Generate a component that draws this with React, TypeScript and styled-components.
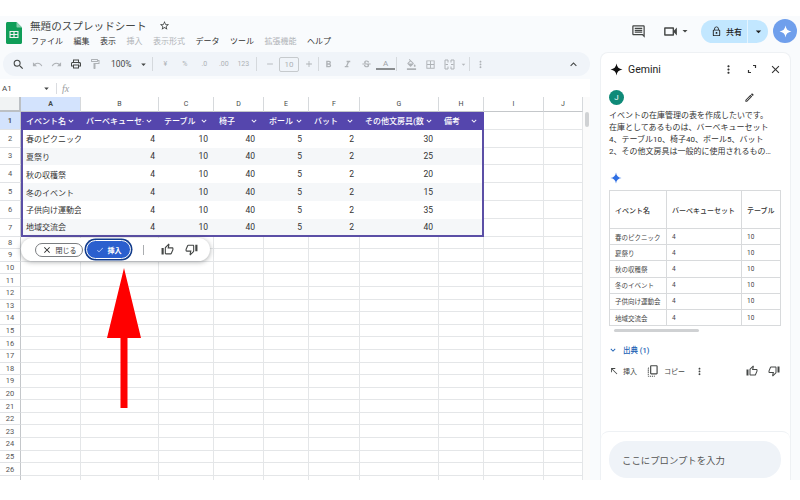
import React from "react";
import styled, { createGlobalStyle } from "styled-components";
import {
  MdSearch,
  MdUndo,
  MdRedo,
  MdOutlineLocalPrintshop,
  MdOutlineFormatPaint,
  MdArrowDropDown,
  MdRemove,
  MdAdd,
  MdFormatBold,
  MdFormatItalic,
  MdStrikethroughS,
  MdOutlineFormatColorFill,
  MdBorderAll,
  MdMoreVert,
  MdKeyboardArrowUp,
  MdKeyboardArrowDown,
  MdStarBorder,
  MdOutlineComment,
  MdOutlineVideocam,
  MdLockOutline,
  MdClose,
  MdOutlineEdit,
  MdOutlineThumbUp,
  MdOutlineThumbDown,
  MdCheck,
  MdNorthWest,
  MdOutlineCopyAll,
} from "react-icons/md";

const FONT = `Roboto, "Noto Sans CJK JP", sans-serif`;

const GlobalStyle = createGlobalStyle`
  html, body {
    margin: 0;
    padding: 0;
    background: #ffffff;
    font-family: ${FONT};
  }
  * { box-sizing: border-box; }
`;

const columns = [
  { letter: "A", width: 60, label: "イベント名", pad: 0 },
  { letter: "B", width: 78, label: "バーベキューセ‧", pad: 4 },
  { letter: "C", width: 55, label: "テーブル", pad: 6 },
  { letter: "D", width: 50, label: "椅子", pad: 9 },
  { letter: "E", width: 45, label: "ボール", pad: 7 },
  { letter: "F", width: 51, label: "バット", pad: 6 },
  { letter: "G", width: 79, label: "その他文房具(数", pad: 6 },
  { letter: "H", width: 45, label: "備考", pad: 0 },
  { letter: "I", width: 60, label: "", pad: 0 },
  { letter: "J", width: 39, label: "", pad: 0 },
];

const events = [
  ["春のピクニック", "30"],
  ["夏祭り", "25"],
  ["秋の収穫祭", "20"],
  ["冬のイベント", "15"],
  ["子供向け運動会", "35"],
  ["地域交流会", "40"],
];

const menuItems = [
  { label: "ファイル" },
  { label: "編集" },
  { label: "表示" },
  { label: "挿入", muted: true },
  { label: "表示形式", muted: true },
  { label: "データ" },
  { label: "ツール" },
  { label: "拡張機能", muted: true },
  { label: "ヘルプ" },
];

const GeminiStar = ({ size, color }: { size: number; color: string }) => (
  <svg width={size} height={size} viewBox="0 0 24 24">
    <path
      fill={color}
      d="M12 1C12.9 7.6 16.4 11.1 23 12C16.4 12.9 12.9 16.4 12 23C11.1 16.4 7.6 12.9 1 12C7.6 11.1 11.1 7.6 12 1Z"
    />
  </svg>
);

const SheetsLogo = () => (
  <svg width="16" height="22" viewBox="0 0 16 22">
    <path fill="#0f9d58" d="M1.5 0H10.5L16 5.5V20.5C16 21.3 15.3 22 14.5 22H1.5C.7 22 0 21.3 0 20.5V1.5C0 .7.7 0 1.5 0Z" />
    <path fill="#87ceac" d="M10.5 0L16 5.5H11.5C10.9 5.5 10.5 5.1 10.5 4.5Z" />
    <path fill="#f1f1f1" d="M3.5 9H12.5V16H3.5ZM4.6 10.1V12H7.4V10.1ZM8.6 10.1V12H11.4V10.1ZM4.6 13V14.9H7.4V13ZM8.6 13V14.9H11.4V13Z" fillRule="evenodd" />
  </svg>
);

const MergeIcon = () => (
  <svg width="11" height="11" viewBox="0 0 11 11" fill="none" stroke="#aeb2b6" strokeWidth="1">
    <path d="M4 3.5V1H1V10H4V7.5M7 3.5V1H10V10H7V7.5M1.5 5.5H4M9.5 5.5H7" />
  </svg>
);

const ExpandCorners = () => (
  <svg width="10" height="10" viewBox="0 0 10 10" fill="none" stroke="#333" strokeWidth="1.2">
    <path d="M6 1.5H8.5V4M1.5 6V8.5H4" />
  </svg>
);

const App = () => (
  <Page>
    <GlobalStyle />
    <Frame>
      <TopBar>
        <LogoSlot>
          <SheetsLogo />
        </LogoSlot>
        <TitleBlock>
          <TitleRow>
            <Title>無題のスプレッドシート</Title>
            <MdStarBorder size={11} color="#444746" />
          </TitleRow>
          <MenuRow>
            {menuItems.map((item) => (
              <MenuItem key={item.label} $muted={item.muted}>
                {item.label}
              </MenuItem>
            ))}
          </MenuRow>
        </TitleBlock>
        <TopActions>
          <MdOutlineComment size={15} color="#444746" />
          <VideoButton>
            <MdOutlineVideocam size={17} color="#444746" />
            <MdArrowDropDown size={12} color="#444746" />
          </VideoButton>
          <SharePill>
            <ShareMain>
              <MdLockOutline size={11} color="#222" />
              共有
            </ShareMain>
            <ShareArrow>
              <MdArrowDropDown size={13} color="#222" />
            </ShareArrow>
          </SharePill>
          <GeminiCircle>
            <GeminiStar size={13} color="#ffffff" />
          </GeminiCircle>
        </TopActions>
      </TopBar>
      <Body>
        <Main>
          <Toolbar>
            <ToolIcon><MdSearch size={13} color="#444746" /></ToolIcon>
            <ToolIcon $muted><MdUndo size={11} /></ToolIcon>
            <ToolIcon $muted><MdRedo size={11} /></ToolIcon>
            <ToolIcon><MdOutlineLocalPrintshop size={12} color="#444746" /></ToolIcon>
            <ToolIcon $muted><MdOutlineFormatPaint size={12} /></ToolIcon>
            <ZoomValue>100%</ZoomValue>
            <MdArrowDropDown size={11} color="#444746" />
            <ToolDivider $left={3} $right={3} />
            <ToolText>¥</ToolText>
            <ToolText>%</ToolText>
            <ToolText>.0</ToolText>
            <ToolText>.00</ToolText>
            <ToolText>123</ToolText>
            <ToolDivider $left={3} $right={3} />
            <ToolIcon $muted><MdRemove size={10} /></ToolIcon>
            <FontSizeBox>10</FontSizeBox>
            <ToolIcon $muted><MdAdd size={10} /></ToolIcon>
            <ToolDivider />
            <ToolIcon $muted><MdFormatBold size={11} /></ToolIcon>
            <ToolIcon $muted><MdFormatItalic size={11} /></ToolIcon>
            <ToolIcon $muted><MdStrikethroughS size={11} /></ToolIcon>
            <TextColor>A</TextColor>
            <ToolDivider $left={1} $right={5} />
            <ToolIcon $muted><MdOutlineFormatColorFill size={11} /></ToolIcon>
            <ToolIcon $muted><MdBorderAll size={11} /></ToolIcon>
            <ToolIcon $muted><MergeIcon /></ToolIcon>
            <MdArrowDropDown size={9} color="#b5b9bd" />
            <ToolDivider $left={1} $right={1} />
            <ToolIcon $muted><MdMoreVert size={11} /></ToolIcon>
            <ToolbarEnd>
              <MdKeyboardArrowUp size={13} color="#444746" />
            </ToolbarEnd>
          </Toolbar>
          <FormulaBar>
            <NameBox>A1</NameBox>
            <MdArrowDropDown size={11} color="#444746" />
            <FormulaDivider />
            <FxMark>fx</FxMark>
          </FormulaBar>
          <SheetArea>
            <SheetGrid>
              <Corner />
              {columns.map((col) => (
                <ColumnHead key={col.letter} $active={col.letter === "A"}>
                  {col.letter}
                </ColumnHead>
              ))}

              <RowHead $active>1</RowHead>
              {columns.map((col, i) =>
                i < 8 ? (
                  <TableHead key={col.letter}>
                    <span>{col.label}</span>
                    <MdKeyboardArrowDown size={10} color="#ffffff" />
                  </TableHead>
                ) : (
                  <Cell key={col.letter} />
                )
              )}

              {events.map(([name, other], rowIndex) => (
                <React.Fragment key={name}>
                  <RowHead>{rowIndex + 2}</RowHead>
                  {columns.map((col, i) => {
                    const values = [name, "4", "10", "40", "5", "2", other, ""];
                    if (i >= 8) return <Cell key={col.letter} />;
                    return (
                      <TableCell
                        key={col.letter}
                        $stripe={rowIndex % 2 === 1}
                        $first={i === 0}
                        $last={i === 7}
                        $bottom={rowIndex === 5}
                        $pad={col.pad}
                      >
                        {values[i]}
                      </TableCell>
                    );
                  })}
                </React.Fragment>
              ))}

              {Array.from({ length: 20 }, (_, r) => (
                <React.Fragment key={r}>
                  <RowHead>{r < 19 ? r + 8 : ""}</RowHead>
                  {columns.map((col) => (
                    <Cell key={col.letter} />
                  ))}
                </React.Fragment>
              ))}
            </SheetGrid>
            <ScrollTrack>
              <ScrollThumb />
            </ScrollTrack>

            <InsertBar>
              <CloseChip>
                <MdClose size={10} color="#222" />
                閉じる
              </CloseChip>
              <InsertChip>
                <MdCheck size={8} color="#cfe0ff" />
                挿入
              </InsertChip>
              <BarDivider />
              <BarIcons>
                <MdOutlineThumbUp size={13} color="#444746" />
                <MdOutlineThumbDown size={13} color="#444746" />
              </BarIcons>
            </InsertBar>

            <BigArrow width="36" height="141" viewBox="0 0 36 141">
              <path fill="#ff0000" d="M18 0L35 70H21.5V140H14.5V70H1Z" />
            </BigArrow>
          </SheetArea>
        </Main>

        <Panel>
          <PanelHeader>
            <GeminiStar size={13} color="#111" />
            <PanelTitle>Gemini</PanelTitle>
            <PanelHeaderIcons>
              <MdMoreVert size={13} color="#333" />
              <ExpandCorners />
              <MdClose size={13} color="#333" />
            </PanelHeaderIcons>
          </PanelHeader>
          <PromptHead>
            <Avatar>J</Avatar>
            <MdOutlineEdit size={11} color="#333" />
          </PromptHead>
          <PromptText>
            イベントの在庫管理の表を作成したいです。
            <br />
            在庫としてあるものは、バーベキューセット
            <br />
            4、テーブル10、椅子40、ボール5、バット
            <br />
            2、その他文房具は一般的に使用されるもの…
          </PromptText>
          <ReplyStar>
            <GeminiStar size={12} color="#2f6fe4" />
          </ReplyStar>
          <ReplyTable>
            <ReplyHeadCell>イベント名</ReplyHeadCell>
            <ReplyHeadCell>バーベキューセット</ReplyHeadCell>
            <ReplyHeadCell>テーブル</ReplyHeadCell>
            {events.map(([name]) => (
              <React.Fragment key={name}>
                <ReplyCell>{name}</ReplyCell>
                <ReplyCell>4</ReplyCell>
                <ReplyCell>10</ReplyCell>
              </React.Fragment>
            ))}
          </ReplyTable>
          <ReplyScrollbar />
          <SourceRow>
            <MdKeyboardArrowDown size={10} color="#1a5fb4" />
            出典 (1)
          </SourceRow>
          <ActionRow>
            <MdNorthWest size={10} color="#444746" />
            <ActionLabel>挿入</ActionLabel>
            <MdOutlineCopyAll size={14} color="#444746" />
            <ActionLabel>コピー</ActionLabel>
            <MdMoreVert size={11} color="#444746" />
            <ActionEnd>
              <MdOutlineThumbUp size={12} color="#444746" />
              <MdOutlineThumbDown size={12} color="#444746" />
            </ActionEnd>
          </ActionRow>
          <PromptDock>
            <PromptInput>ここにプロンプトを入力</PromptInput>
          </PromptDock>
        </Panel>
      </Body>
    </Frame>
  </Page>
);

const Page = styled.div`
  width: 800px;
  height: 500px;
  padding-top: 16px;
  overflow: hidden;
  background: #ffffff;
`;

const Frame = styled.div`
  height: 464px;
  background: #f9fbfd;
  display: flex;
  flex-direction: column;
`;

const TopBar = styled.div`
  height: 36px;
  display: flex;
  align-items: flex-start;
  color: #1f1f1f;
`;

const LogoSlot = styled.div`
  width: 30px;
  padding: 6px 0 0 6px;
`;

const TitleBlock = styled.div`
  display: flex;
  flex-direction: column;
  padding-top: 2px;
`;

const TitleRow = styled.div`
  display: flex;
  align-items: center;
  gap: 12px;
  height: 14px;
`;

const Title = styled.div`
  font-size: 10.6px;
  color: #444746;
`;

const MenuRow = styled.div`
  display: flex;
  gap: 10.5px;
  margin-top: 3px;
  padding-left: 1px;
`;

const MenuItem = styled.div<{ $muted?: boolean }>`
  font-size: 8px;
  line-height: 14px;
  color: ${(p) => (p.$muted ? "#b0b3b7" : "#333")};
`;

const TopActions = styled.div`
  margin-left: auto;
  display: flex;
  align-items: center;
  height: 24px;
  margin-top: 3px;
  padding-right: 3px;
`;

const VideoButton = styled.div`
  display: flex;
  align-items: center;
  margin: 0 10px 0 16px;
`;

const SharePill = styled.div`
  width: 67px;
  height: 23px;
  border-radius: 12px;
  background: #c2e7ff;
  display: flex;
  align-items: center;
  margin-right: 5px;
`;

const ShareMain = styled.div`
  width: 47px;
  height: 100%;
  display: flex;
  align-items: center;
  gap: 4px;
  padding-left: 10px;
  border-right: 1px solid #e4f4ff;
  font-size: 8px;
  font-weight: 500;
  color: #222;
`;

const ShareArrow = styled.div`
  flex: 1;
  display: flex;
  justify-content: center;
`;

const GeminiCircle = styled.div`
  width: 24px;
  height: 24px;
  border-radius: 50%;
  background: #6f9fec;
  display: flex;
  align-items: center;
  justify-content: center;
`;

const Body = styled.div`
  flex: 1;
  display: flex;
  min-height: 0;
`;

const Main = styled.div`
  width: 590px;
  display: flex;
  flex-direction: column;
`;

const Toolbar = styled.div`
  height: 24px;
  margin-left: 3px;
  padding-left: 6px;
  border-radius: 12px;
  background: #f0f4f9;
  display: flex;
  align-items: center;
  flex-shrink: 0;
`;

const ToolIcon = styled.div<{ $muted?: boolean }>`
  width: 19px;
  display: flex;
  justify-content: center;
  align-items: center;
  color: ${(p) => (p.$muted ? "#aeb2b6" : "#444746")};
`;

const ToolText = styled.div`
  width: 19.5px;
  text-align: center;
  font-size: 7px;
  color: #aeb2b6;
`;

const ZoomValue = styled.div`
  font-size: 8.5px;
  color: #444746;
  margin-left: 7px;
  margin-right: 6px;
`;

const ToolDivider = styled.div<{ $left?: number; $right?: number }>`
  width: 1px;
  height: 14px;
  background: #d5d9dd;
  margin-left: ${(p) => p.$left ?? 0}px;
  margin-right: ${(p) => p.$right ?? 0}px;
`;

const FontSizeBox = styled.div`
  width: 20px;
  height: 15px;
  border: 1px solid #c6cacd;
  border-radius: 2px;
  font-size: 8px;
  line-height: 13px;
  text-align: center;
  color: #aeb2b6;
`;

const TextColor = styled.div`
  width: 19px;
  font-size: 8px;
  text-align: center;
  color: #9ea2a6;
  line-height: 9px;
  border-bottom: 2px solid #8a8d90;
`;

const ToolbarEnd = styled.div`
  margin-left: auto;
  padding-right: 10px;
  display: flex;
`;

const FormulaBar = styled.div`
  height: 18px;
  margin-top: 3px;
  background: #ffffff;
  display: flex;
  align-items: center;
  flex-shrink: 0;
`;

const NameBox = styled.div`
  width: 41px;
  padding-left: 2px;
  font-size: 8px;
  color: #444746;
`;

const FormulaDivider = styled.div`
  width: 1px;
  height: 11px;
  background: #dadce0;
  margin: 0 5px 0 4px;
`;

const FxMark = styled.div`
  font-family: "Liberation Serif", serif;
  font-style: italic;
  font-size: 10px;
  color: #9a9da0;
`;

const SheetArea = styled.div`
  position: relative;
  flex: 1;
  min-height: 0;
  background: #ffffff;
  display: flex;
  overflow: hidden;
`;

const SheetGrid = styled.div`
  display: grid;
  grid-template-columns: 21px ${columns.map((c) => `${c.width}px`).join(" ")};
  grid-template-rows: 15px repeat(7, 17.8px) repeat(20, 12.6px);
  align-content: start;
  flex-shrink: 0;
`;

const Corner = styled.div`
  background: #f1f3f4;
  border-right: 2px solid #bcc0c4;
  border-bottom: 2px solid #bcc0c4;
`;

const ColumnHead = styled.div<{ $active?: boolean }>`
  background: ${(p) => (p.$active ? "#d3e3fd" : "#ffffff")};
  border-right: 1px solid #d6d9dc;
  border-bottom: 1px solid #c4c7ca;
  font-size: 7px;
  font-weight: ${(p) => (p.$active ? 700 : 400)};
  color: #444746;
  display: flex;
  align-items: center;
  justify-content: center;
`;

const RowHead = styled.div<{ $active?: boolean }>`
  background: ${(p) => (p.$active ? "#d3e3fd" : "#ffffff")};
  border-right: 1px solid #c4c7ca;
  border-bottom: 1px solid #e1e3e6;
  font-size: 7.5px;
  font-weight: ${(p) => (p.$active ? 700 : 400)};
  color: #555;
  display: flex;
  align-items: center;
  justify-content: center;
`;

const Cell = styled.div`
  border-right: 1px solid #e4e6e8;
  border-bottom: 1px solid #e4e6e8;
`;

const TableHead = styled.div`
  background: #5546ad;
  color: #ffffff;
  font-size: 8px;
  font-weight: 500;
  padding: 0 5px 0 5px;
  display: flex;
  align-items: center;
  justify-content: space-between;
  white-space: nowrap;
  overflow: hidden;
  span {
    overflow: hidden;
  }
`;

const TableCell = styled.div<{
  $stripe: boolean;
  $first: boolean;
  $last: boolean;
  $bottom: boolean;
  $pad: number;
}>`
  background: ${(p) => (p.$stripe ? "#f5f7f9" : "#ffffff")};
  border-left: ${(p) => (p.$first ? "2px solid #5b4fa6" : "none")};
  border-right: ${(p) => (p.$last ? "2px solid #5b4fa6" : "none")};
  border-bottom: ${(p) => (p.$bottom ? "2px solid #5b4fa6" : "none")};
  font-size: ${(p) => (p.$first ? "8px" : "8.5px")};
  color: #333;
  display: flex;
  align-items: center;
  justify-content: ${(p) => (p.$first ? "flex-start" : "flex-end")};
  padding-left: ${(p) => (p.$first ? "3px" : "0")};
  padding-right: ${(p) => p.$pad}px;
  white-space: nowrap;
`;

const ScrollTrack = styled.div`
  width: 7px;
  padding: 15px 1px 0 2px;
  background: #fbfbfb;
`;

const ScrollThumb = styled.div`
  height: 15px;
  border-radius: 3px;
  background: #d0d2d4;
`;

const InsertBar = styled.div`
  position: absolute;
  left: 21px;
  top: 141px;
  width: 189px;
  height: 23px;
  background: #ffffff;
  border-radius: 12px;
  box-shadow: 0 1px 5px rgba(60, 64, 67, 0.45);
  display: flex;
  align-items: center;
  padding-left: 14px;
`;

const CloseChip = styled.div`
  width: 48px;
  height: 14px;
  border: 1px solid #7a7d80;
  border-radius: 7px;
  font-size: 7px;
  color: #333;
  display: flex;
  align-items: center;
  justify-content: center;
  gap: 4px;
`;

const InsertChip = styled.div`
  width: 45px;
  height: 19px;
  margin-left: 3px;
  border-radius: 10px;
  background: #2b5fce;
  border: 1px solid #ffffff;
  box-shadow: 0 0 0 1.5px #123c8c;
  color: #ffffff;
  font-size: 7px;
  font-weight: 700;
  display: flex;
  align-items: center;
  justify-content: center;
  gap: 4px;
`;

const BarDivider = styled.div`
  width: 1px;
  height: 10px;
  background: #aaadb0;
  margin: 0 17px 0 12px;
`;

const BarIcons = styled.div`
  display: flex;
  gap: 11px;
`;

const BigArrow = styled.svg`
  position: absolute;
  left: 106px;
  top: 171px;
`;

const Panel = styled.div`
  width: 191px;
  margin-left: 10px;
  background: #ffffff;
  border: 1px solid #eef1f4;
  border-bottom: none;
  border-radius: 8px 8px 0 0;
  display: flex;
  flex-direction: column;
  padding: 0 9px 0 8px;
  min-height: 0;
  position: relative;
`;

const PanelHeader = styled.div`
  display: flex;
  align-items: center;
  height: 32px;
  padding-left: 1px;
  gap: 5px;
`;

const PanelTitle = styled.div`
  font-size: 10.5px;
  color: #222;
`;

const PanelHeaderIcons = styled.div`
  margin-left: auto;
  display: flex;
  align-items: center;
  gap: 12px;
  margin-right: -1px;
`;

const PromptHead = styled.div`
  display: flex;
  align-items: center;
  justify-content: space-between;
  height: 15px;
  margin-top: 5px;
  padding-right: 26px;
`;

const Avatar = styled.div`
  width: 15px;
  height: 15px;
  border-radius: 50%;
  background: #0f8a78;
  color: #ffffff;
  font-size: 8px;
  display: flex;
  align-items: center;
  justify-content: center;
`;

const PromptText = styled.div`
  margin-top: 5px;
  font-size: 8px;
  line-height: 12px;
  color: #333;
  white-space: nowrap;
`;

const ReplyStar = styled.div`
  height: 12px;
  margin-top: 14px;
  display: flex;
  padding-left: 1px;
`;

const ReplyTable = styled.div`
  display: grid;
  grid-template-columns: 57px 75px 39px;
  grid-template-rows: 38px repeat(6, 16.2px);
  margin-top: 6px;
  border-left: 1px solid #d8dadc;
  border-top: 1px solid #d8dadc;
`;

const ReplyHeadCell = styled.div`
  border-right: 1px solid #d8dadc;
  border-bottom: 1px solid #d8dadc;
  font-size: 7px;
  font-weight: 500;
  color: #333;
  display: flex;
  align-items: center;
  padding-left: 5px;
  white-space: nowrap;
  overflow: hidden;
`;

const ReplyCell = styled.div`
  border-right: 1px solid #d8dadc;
  border-bottom: 1px solid #d8dadc;
  font-size: 6.5px;
  color: #444;
  display: flex;
  align-items: center;
  padding-left: 5px;
  white-space: nowrap;
  overflow: hidden;
`;

const ReplyScrollbar = styled.div`
  width: 85px;
  height: 3px;
  margin: 3px 0 0 5px;
  border-radius: 2px;
  background: #cfd1d3;
  flex-shrink: 0;
`;

const SourceRow = styled.div`
  display: flex;
  align-items: center;
  gap: 5px;
  margin-top: 12px;
  margin-left: -1px;
  font-size: 7.5px;
  font-weight: 500;
  color: #1a5fb4;
`;

const ActionRow = styled.div`
  display: flex;
  align-items: center;
  margin-top: 9px;
`;

const ActionLabel = styled.div`
  font-size: 7px;
  color: #444746;
  margin: 0 9px 0 4px;
`;

const ActionEnd = styled.div`
  margin-left: auto;
  display: flex;
  gap: 10px;
  margin-right: 1px;
`;

const PromptDock = styled.div`
  position: absolute;
  left: 0;
  right: 0;
  bottom: 0;
  height: 49px;
  border-top: 1px solid #eef1f4;
  border-radius: 8px 8px 0 0;
  padding: 9px 9px 0 8px;
`;

const PromptInput = styled.div`
  height: 37px;
  border-radius: 18px;
  background: #eff3f8;
  font-size: 9.4px;
  color: #555;
  display: flex;
  align-items: center;
  padding-left: 13px;
`;

export default App;
